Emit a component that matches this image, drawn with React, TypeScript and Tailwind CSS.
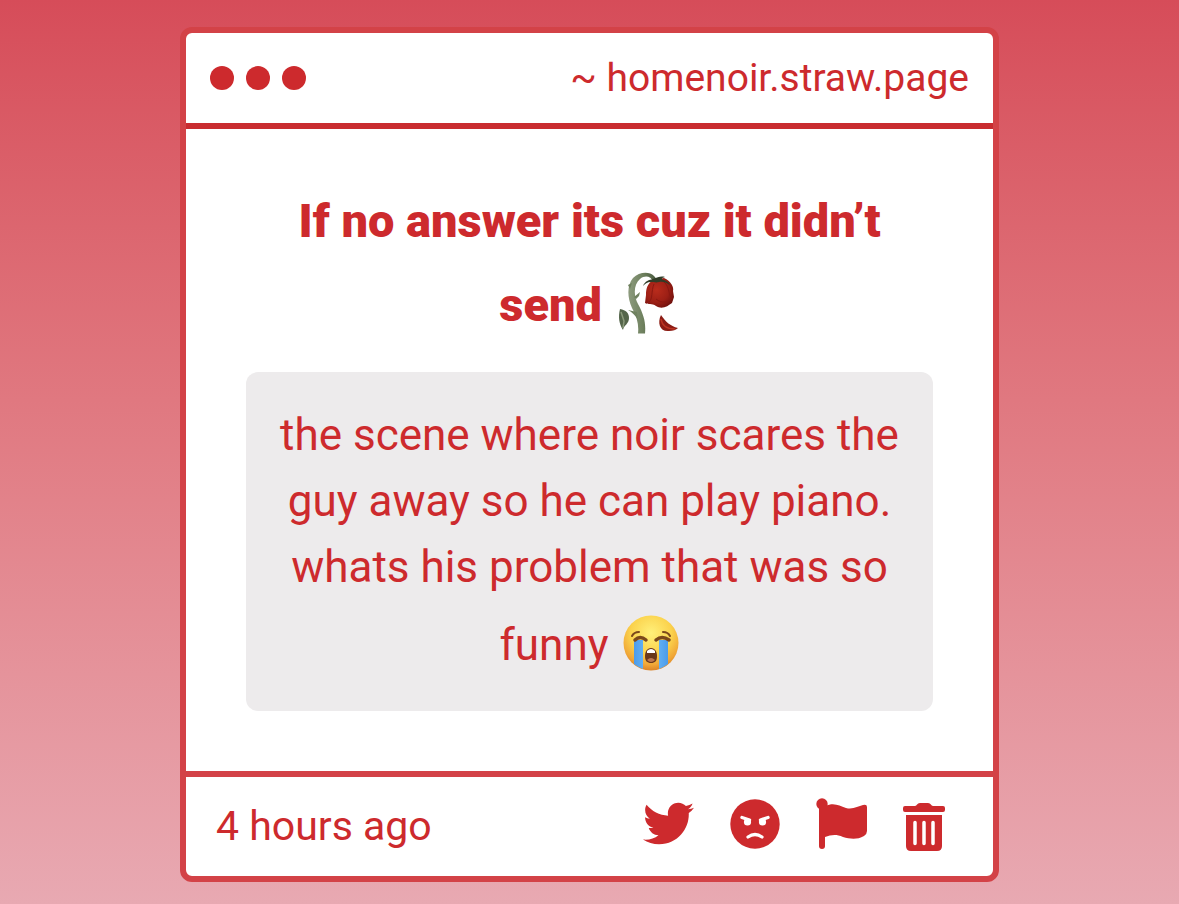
import type { ReactNode } from "react";

function WiltedRose() {
  return (
    <svg viewBox="0 0 62 62" role="img" aria-label="wilted flower" className="mt-[19px] mb-2 ml-1 inline-block h-[62px] w-[62px] align-[-21px]">
      <defs>
        <linearGradient id="stem" x1="0" x2="1">
          <stop offset="0" stopColor="#8d9b7e" />
          <stop offset="0.5" stopColor="#6f815f" />
          <stop offset="1" stopColor="#46573c" />
        </linearGradient>
        <radialGradient id="petal" cx="0.4" cy="0.4" r="0.7">
          <stop offset="0" stopColor="#b92c1c" />
          <stop offset="0.6" stopColor="#9c1f15" />
          <stop offset="1" stopColor="#6b0f0c" />
        </radialGradient>
      </defs>
      <path d="M20 61.5C21 53 19 45 14 36C9 25 9 13 15 6C21 0 31 -1 36 4C38 6 39 8 39 11L35 10C33 4 27 3 22 7C16 12 15 23 20 32C26 43 28 51 27 61.5Z" fill="url(#stem)" />
      <path d="M12 17L10 13L14 11ZM16 25L22 20L21 24L18 27ZM20 48C17 43 14 40 10 38L19 40Z" fill="#6f815f" />
      <path d="M2 37C8 38 11 41 11 46C11 52 6 53 5 58C1 52 0 45 2 37Z" fill="#54654a" />
      <path d="M3 40L6 49L5 56" fill="none" stroke="#8b9a7b" strokeWidth="1.5" />
      <path d="M35 8C29 12 28 17 28 23L27 31C30 33 34 31 38 34C44 38 50 34 54 31L56 25L55 19C56 15 53 9 46 6Z" fill="url(#petal)" />
      <path d="M36 12C33 19 35 27 31 30M46 10C52 15 50 23 54 27M38 27C44 32 50 30 53 27" fill="none" stroke="#8a1811" strokeWidth="1" />
      <path d="M25 14C27 9 31 8 35 7C40 5 43 4 47 5C43 6 43 7 46 8C49 9 51 11 52 13C48 10 44 9 41 10C38 11 36 10 33 10C29 10 27 12 25 14Z" fill="#303c27" />
      <path d="M43 43C39 51 42 60 51 59C55 59 58 58 60 56C52 54 48 50 43 43Z" fill="#8c1c14" />
      <path d="M43 47C44 54 49 57 57 57" fill="none" stroke="#bd3422" strokeWidth="1.5" />
    </svg>
  );
}

function CryingFace() {
  return (
    <svg viewBox="0 0 56 56" role="img" aria-label="loudly crying face" className="mt-[15px] mb-2.5 ml-1 inline-block h-14 w-14 align-[-21px]">
      <defs>
        <radialGradient id="face" cx="0.5" cy="0.32" r="0.68">
          <stop offset="0" stopColor="#fff07a" />
          <stop offset="0.55" stopColor="#fbd24c" />
          <stop offset="0.85" stopColor="#f0a637" />
          <stop offset="1" stopColor="#dc8427" />
        </radialGradient>
        <linearGradient id="tear" x1="0" x2="1">
          <stop offset="0" stopColor="#4b9bea" />
          <stop offset="0.5" stopColor="#74c0fa" />
          <stop offset="1" stopColor="#4b9bea" />
        </linearGradient>
      </defs>
      <circle cx="28" cy="28" r="27.5" fill="url(#face)" />
      <path d="M11 25H20V54Q15 52 11 49ZM36 25H45V49Q41 52 36 54Z" fill="url(#tear)" />
      <path d="M12 25Q17 20 23 25M33 25Q39 20 46 25" fill="none" stroke="#7b481b" strokeWidth="3.5" strokeLinecap="round" />
      <path d="M9 21Q11 17 16 17M40 17Q45 17 47 21" fill="none" stroke="#7b481b" strokeWidth="2" strokeLinecap="round" />
      <path d="M28 33C24 33 22 37 22 41C22 46 24 48 28 48C32 48 34 46 34 41C34 37 32 33 28 33Z" fill="#69381b" />
      <path d="M24 36Q28 32 32 36V38H24Z" fill="#fff" />
      <path d="M24 45Q28 41 32 45Q28 49 24 45Z" fill="#bc7750" />
    </svg>
  );
}

function TwitterIcon() {
  return (
    <svg viewBox="0 0 512 512" className="h-[51px] w-[51px]" fill="currentColor" aria-hidden="true">
      <path d="M459.37 151.716c.325 4.548.325 9.097.325 13.645 0 138.72-105.583 298.558-298.558 298.558-59.452 0-114.68-17.219-161.137-47.106 8.447.974 16.568 1.299 25.34 1.299 49.055 0 94.213-16.568 130.274-44.832-46.132-.975-84.792-31.188-98.112-72.772 6.498.974 12.995 1.624 19.818 1.624 9.421 0 18.843-1.3 27.614-3.573-48.081-9.747-84.143-51.98-84.143-102.985v-1.299c13.969 7.797 30.214 12.67 47.431 13.319-28.264-18.843-46.781-51.005-46.781-87.391 0-19.492 5.197-37.36 14.294-52.954 51.655 63.675 129.3 105.258 216.365 109.807-1.624-7.797-2.599-15.918-2.599-24.04 0-57.828 46.782-104.934 104.934-104.934 30.213 0 57.502 12.67 76.67 33.137 23.715-4.548 46.456-13.32 66.599-25.34-7.798 24.366-24.366 44.833-46.132 57.827 21.117-2.273 41.584-8.122 60.426-16.243-14.292 20.791-32.161 39.308-52.628 54.253z" />
    </svg>
  );
}

function AngryIcon() {
  return (
    <svg viewBox="0 0 50 50" className="h-[50px] w-[50px]" fill="none" aria-hidden="true">
      <circle cx="25" cy="25" r="24.7" fill="currentColor" />
      <path d="M12 18.5L19.5 21M38 18.5L30.500 21" stroke="white" strokeWidth="3.4" strokeLinecap="round" />
      <circle cx="17.5" cy="23" r="3.6" fill="white" />
      <circle cx="32.5" cy="23" r="3.6" fill="white" />
      <path d="M18 38Q25 33 32 38" stroke="white" strokeWidth="3.2" strokeLinecap="round" />
    </svg>
  );
}

function FlagIcon() {
  return (
    <svg viewBox="0 0 51 52" className="h-[52px] w-[51px]" fill="currentColor" aria-hidden="true">
      <circle cx="6" cy="6" r="5.7" />
      <path d="M3 6H9V48Q9 51 6 51Q3 51 3 48Z" />
      <path d="M9 8C19 4 23 8 30 10C37 12 42 8 47 7Q51 6 51 9V33Q51 36 48 38C41 42 34 41 27 39C20 36 15 37 9 39Z" />
    </svg>
  );
}

function TrashIcon() {
  return (
    <svg viewBox="0 -6 42 54" className="h-[54px] w-[42px]" fill="currentColor" aria-hidden="true">
      <path d="M2 3H12C14 3 14 0 17 0H25C28 0 28 3 30 3H40Q42 3 42 5V7Q42 9 40 9H2Q0 9 0 7V5Q0 3 2 3Z" />
      <path d="M3 12H39V43Q39 48 34 48H8Q3 48 3 43Z" />
      <path d="M12 19.5V40.5M21 19.5V40.5M30 19.5V40.5" stroke="white" strokeWidth="3.5" strokeLinecap="round" />
    </svg>
  );
}

function IconButton({ label, children }: { label: string; children: ReactNode }) {
  return (
    <button type="button" aria-label={label} className="flex cursor-pointer items-center justify-center">
      {children}
    </button>
  );
}

export default function App() {
  return (
    <div className="min-h-screen bg-linear-to-b from-[#d64c59] to-[#e8a9b2] px-4 pt-[27px] pb-[22px] font-[Roboto,sans-serif] text-[#cd2a2d]">
      <main className="mx-auto w-full max-w-[819px] rounded-xl border-6 border-[#d34247] bg-white">
        <header className="flex h-24 items-center justify-between border-b-6 border-[#c92c30] px-6">
          <div className="flex gap-3">
            <span className="size-6 rounded-full bg-[#cd2a2d]" />
            <span className="size-6 rounded-full bg-[#cd2a2d]" />
            <span className="size-6 rounded-full bg-[#cd2a2d]" />
          </div>
          <a href="#" className="text-[39px]">~ homenoir.straw.page</a>
        </header>

        <section className="p-[60px] text-center">
          <h1 className="mb-[30px] text-[47px] leading-[64px] font-black">
            If no answer its cuz it didn’t{" "}
            <span className="whitespace-nowrap">
              send <WiltedRose />
            </span>
          </h1>
          <p className="rounded-xl bg-[#edebec] p-[30px] text-[44px] leading-[66px]">
            the scene where noir scares the guy away so he can play piano. whats his problem that was so funny <CryingFace />
          </p>
        </section>

        <footer className="flex h-[105px] items-center justify-between border-t-6 border-[#d34247] pr-12 pl-[30px]">
          <time className="text-[41px]">4 hours ago</time>
          <div className="flex items-center gap-9 pb-1.5">
            <IconButton label="Share on Twitter"><TwitterIcon /></IconButton>
            <IconButton label="Block sender"><AngryIcon /></IconButton>
            <IconButton label="Report"><FlagIcon /></IconButton>
            <IconButton label="Delete"><TrashIcon /></IconButton>
          </div>
        </footer>
      </main>
    </div>
  );
}
